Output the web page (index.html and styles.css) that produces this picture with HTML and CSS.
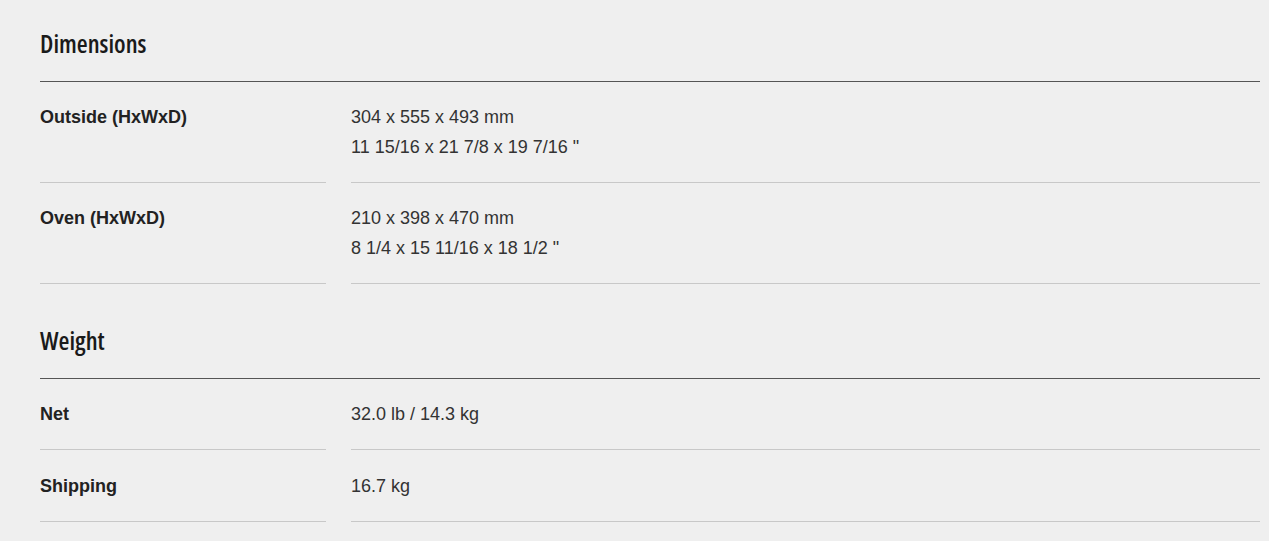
FILE: index.html
```html
<!DOCTYPE html>
<html lang="en">
<head>
<meta charset="utf-8">
<title>Specifications</title>
<link rel="stylesheet" href="styles.css">
</head>
<body>
<div class="specs">
  <section class="group">
    <h2 class="group-title">Dimensions</h2>
    <div class="row">
      <div class="label">Outside (HxWxD)</div>
      <div class="value">304 x 555 x 493 mm<br>11 15/16 x 21 7/8 x 19 7/16 "</div>
    </div>
    <div class="row">
      <div class="label">Oven (HxWxD)</div>
      <div class="value">210 x 398 x 470 mm<br>8 1/4 x 15 11/16 x 18 1/2 "</div>
    </div>
  </section>
  <section class="group">
    <h2 class="group-title">Weight</h2>
    <div class="row">
      <div class="label">Net</div>
      <div class="value">32.0 lb / 14.3 kg</div>
    </div>
    <div class="row">
      <div class="label">Shipping</div>
      <div class="value">16.7 kg</div>
    </div>
  </section>
</div>
</body>
</html>
```
FILE: styles.css
```css
html, body {
  margin: 0;
  padding: 0;
  background: #efefef;
}
.specs {
  padding: 27px 9px 0 40px;
  font-family: "Liberation Sans", Arial, sans-serif;
  font-size: 18px;
}
.group + .group {
  margin-top: 40px;
}
.group-title {
  margin: 0;
  font-family: "Open Sans", sans-serif;
  font-stretch: 75%;
  font-weight: 650;
  font-size: 25px;
  line-height: 32px;
  color: #1a1a1a;
  padding-bottom: 22px;
  border-bottom: 1px solid #555;
}
.row {
  display: grid;
  grid-template-columns: 286px 1fr;
  column-gap: 25px;
}
.label, .value {
  padding: 20px 0;
  line-height: 30px;
  border-bottom: 1px solid #c8c8c8;
}
.group:last-child .row:last-child .label,
.group:last-child .row:last-child .value {
  padding-top: 21px;
}
.label {
  font-weight: bold;
  color: #222;
}
.value {
  color: #333;
}
```
